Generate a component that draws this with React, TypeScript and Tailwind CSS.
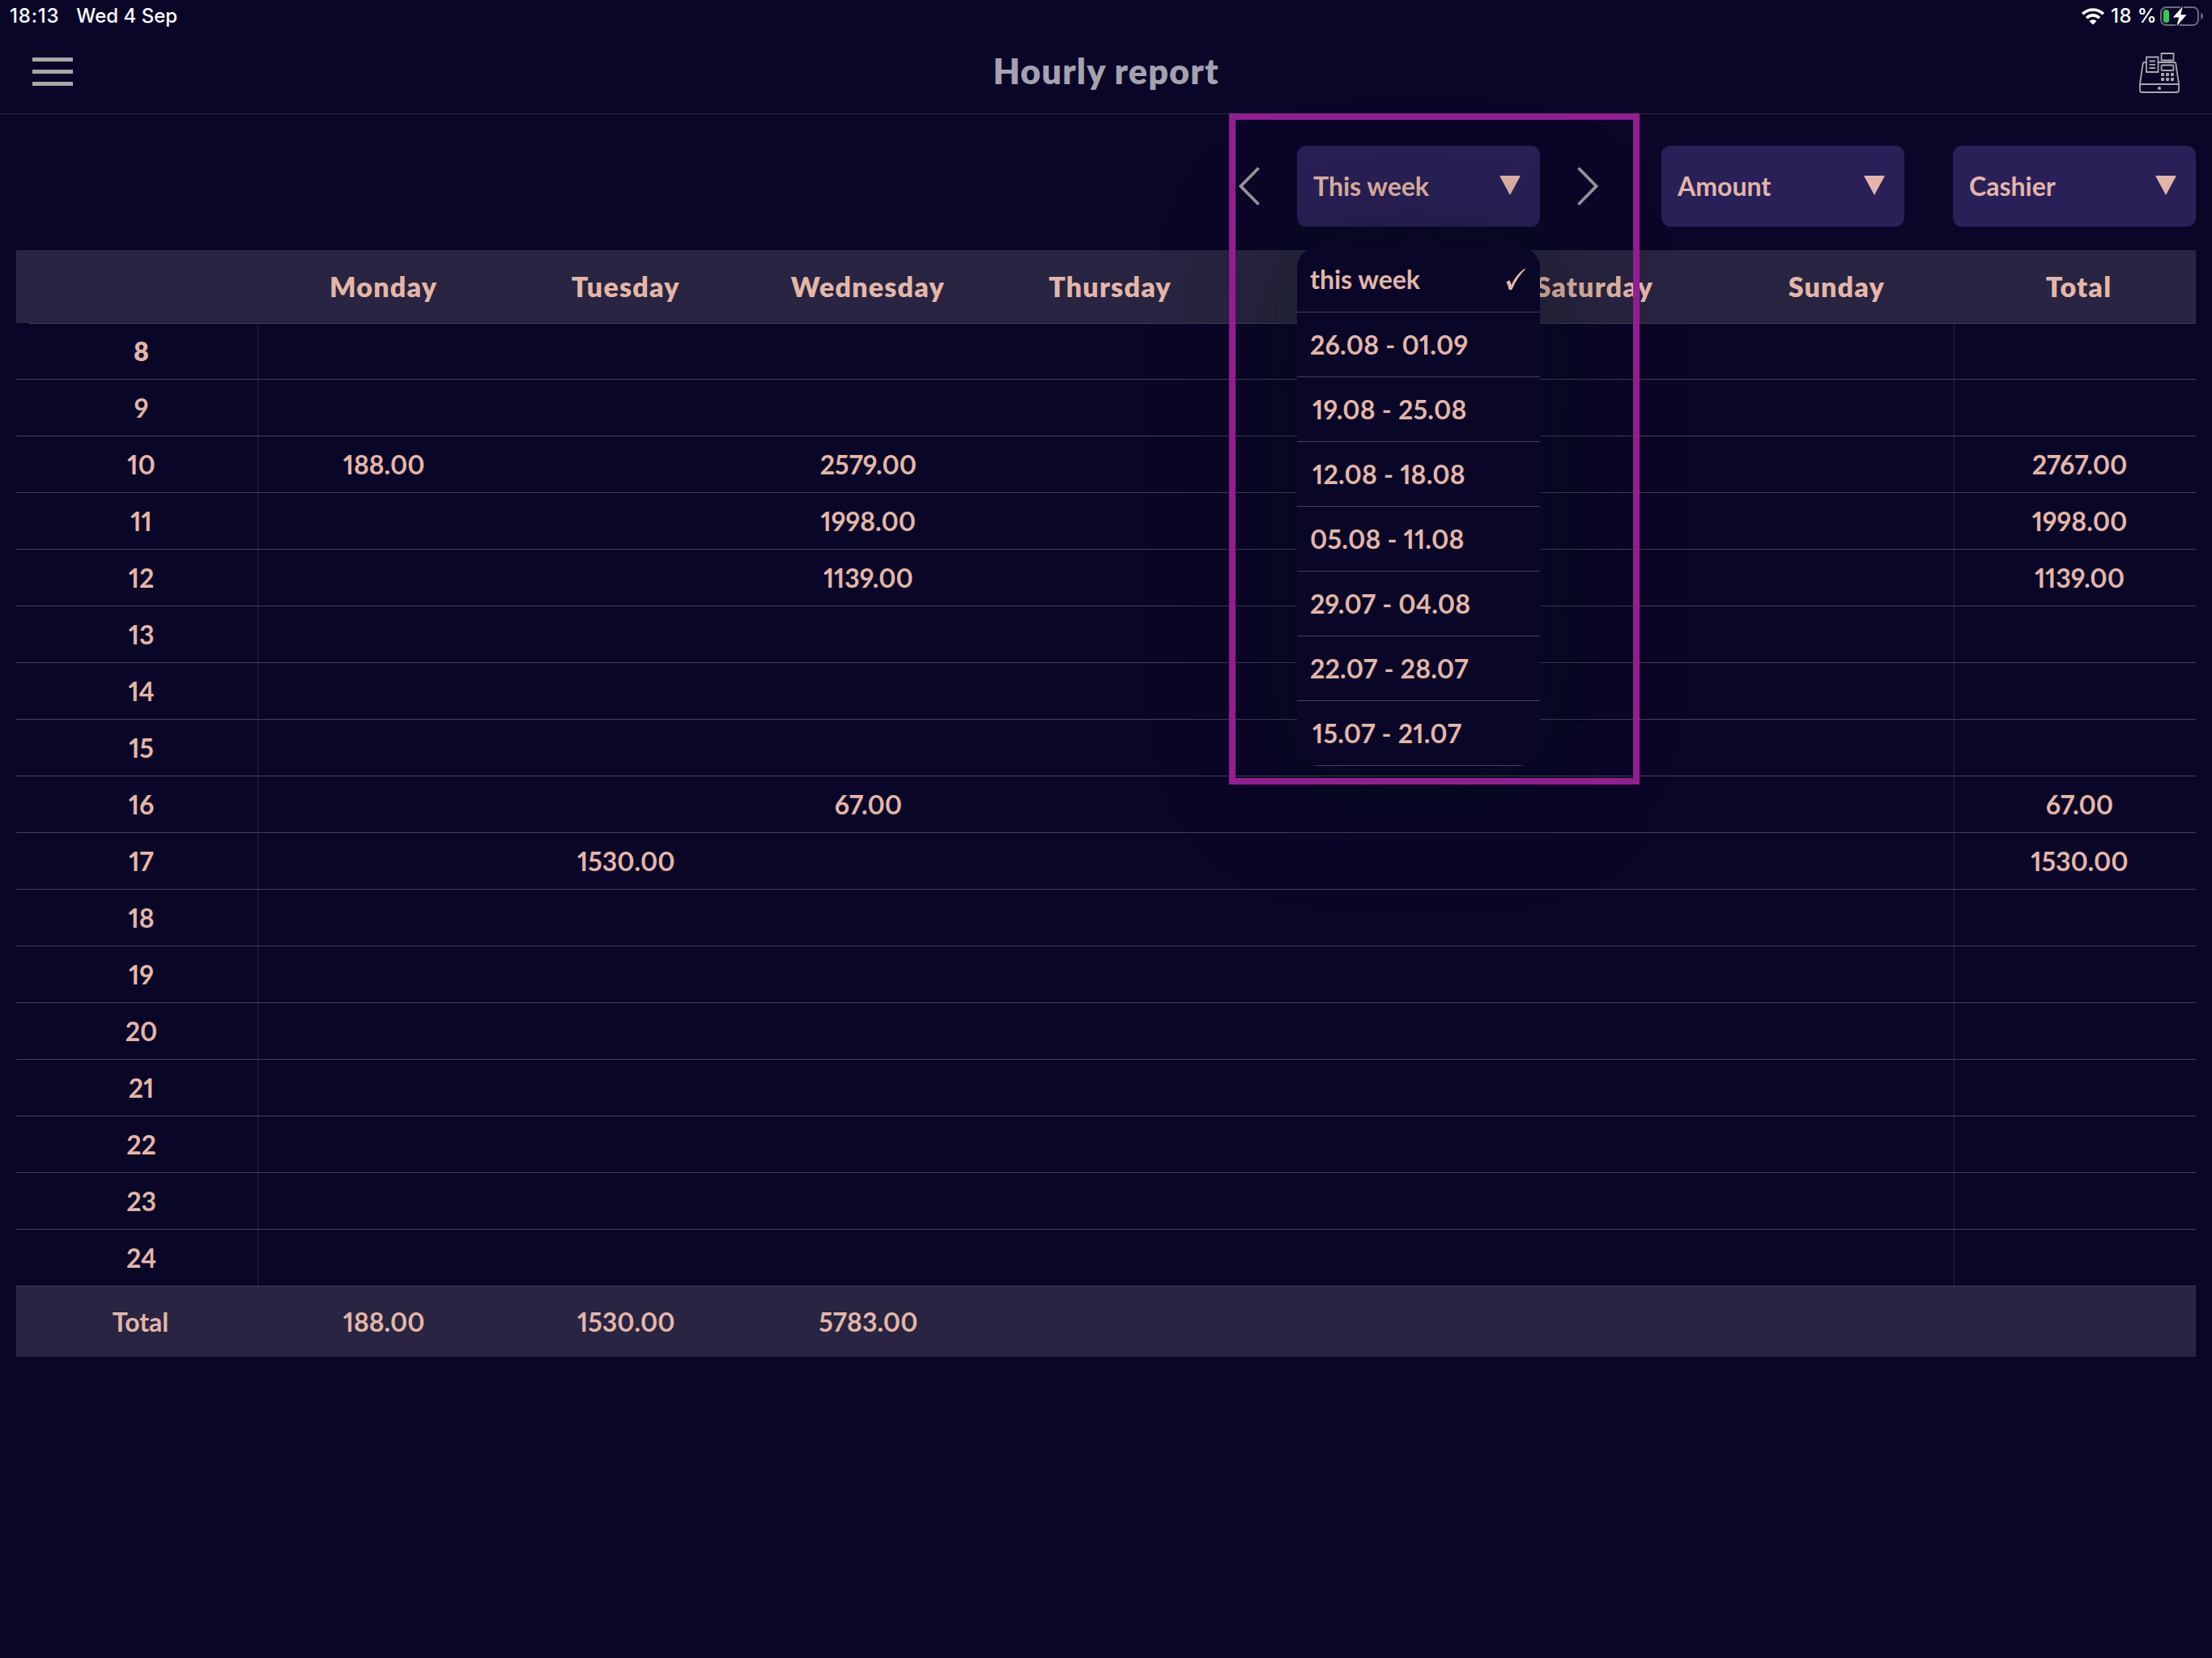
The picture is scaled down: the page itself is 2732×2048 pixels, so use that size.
import clsx from "clsx";

// the Friday heading sits under the open week menu
const columns = ["Monday", "Tuesday", "Wednesday", "Thursday", "", "Saturday", "Sunday", "Total"];

const hours = [8, 9, 10, 11, 12, 13, 14, 15, 16, 17, 18, 19, 20, 21, 22, 23, 24];

// values per hour, keyed by column (1 = Monday ... 8 = Total)
const values: Record<number, Record<number, string>> = {
  10: { 1: "188.00", 3: "2579.00", 8: "2767.00" },
  11: { 3: "1998.00", 8: "1998.00" },
  12: { 3: "1139.00", 8: "1139.00" },
  16: { 3: "67.00", 8: "67.00" },
  17: { 2: "1530.00", 8: "1530.00" },
};

const totals = ["Total", "188.00", "1530.00", "5783.00", "", "", "", "", ""];

const weeks = [
  "this week",
  "26.08 - 01.09",
  "19.08 - 25.08",
  "12.08 - 18.08",
  "05.08 - 11.08",
  "29.07 - 04.08",
  "22.07 - 28.07",
  "15.07 - 21.07",
];

function StatusBar() {
  return (
    <div className="h-10 pl-[12px] pr-[10px] flex items-center justify-between font-['Inter',sans-serif] text-[24px] font-medium leading-none text-white">
      <div className="flex gap-[21px]">
        <span className="tracking-[0.8px]">18:13</span>
        <span>Wed 4 Sep</span>
      </div>
      <div className="flex items-center">
        <svg className="w-[28px] h-[21px] mr-[8px]" viewBox="0 0 28 21" fill="none" stroke="#fff">
          <path d="M1.2 7.2a18.2 18.2 0 0 1 25.6 0" strokeWidth="3.6" />
          <path d="M6 12.2a11.4 11.4 0 0 1 16 0" strokeWidth="3.6" />
          <path d="M9.6 16a6.2 6.2 0 0 1 8.8 0L14 20.4z" fill="#fff" stroke="none" />
        </svg>
        <span className="mr-[4px] tracking-[0.4px]">18 %</span>
        <svg className="w-[54px] h-[26px]" viewBox="0 0 54 26" fill="none">
          <rect x="1" y="2" width="46" height="22" rx="6.5" stroke="#6d6a7e" strokeWidth="2" />
          <path d="M50.2 9v8c1.7-.6 2.8-2.200 2.800-4s-1.100-3.400-2.800-4z" fill="#6d6a7e" />
          <rect x="4" y="5" width="7" height="16" rx="3" fill="#34c759" />
          <path
            d="M28 .8L15.800 14.600h7.400L20.400 25.200 32.600 11.200h-7.400z"
            fill="#fff"
            stroke="#0a0628"
            strokeWidth="3"
            paintOrder="stroke"
          />
        </svg>
      </div>
    </div>
  );
}

function RegisterIcon() {
  return (
    <svg className="w-[50px] h-[50px]" viewBox="0 0 50 50" fill="none" stroke="#a9a7ab" strokeWidth="1.8">
      <path d="M9 12H6.500Q5 12 4.700 13.500L1 38.500v8q0 2.500 2.500 2.500h43q2.500 0 2.500-2.500v-8L45.300 13.500Q45 12 43.500 12H24M1 39h48" />
      <path d="M9 5.500h14.500v18.500H9zM12.500 10.500h7.500M12.500 14.800h7.500M12.500 19h7.500" />
      <path d="M27.500 1h15v8.500h-15zM32.500 9.500v2.500M37.500 9.500v2.500" />
      <rect x="27.500" y="15.500" width="15" height="6.500" rx="1" />
      <g fill="#a9a7ab" stroke="none">
        <rect x="27" y="25" width="4" height="4" rx="1" />
        <rect x="33" y="25" width="4" height="4" rx="1" />
        <rect x="39" y="25" width="4" height="4" rx="1" />
        <rect x="27" y="31" width="4" height="4" rx="1" />
        <rect x="33" y="31" width="4" height="4" rx="1" />
        <rect x="39" y="31" width="4" height="4" rx="1" />
        <circle cx="25" cy="44" r="2.100" />
      </g>
    </svg>
  );
}

function Header() {
  return (
    <header className="h-[101px] px-10 pb-[1px] border-b border-[#2f2b45] flex items-center justify-between">
      <button className="flex flex-col gap-[10px] pb-[2px]">
        <span className="w-[50px] h-[5px] bg-[#a9a7a6]" />
        <span className="w-[50px] h-[5px] bg-[#a9a7a6]" />
        <span className="w-[50px] h-[5px] bg-[#a9a7a6]" />
      </button>
      <h1 className="text-[43px] leading-none font-extrabold tracking-[1.2px] text-[#a4a1b0] pb-[5px]">Hourly report</h1>
      <button>
        <RegisterIcon />
      </button>
    </header>
  );
}

function Select({ label }: { label: string }) {
  return (
    <button className="w-[300px] h-[100px] rounded-[11px] bg-[#2a2058] pl-5 pr-6 flex items-center justify-between">
      <span>{label}</span>
      <svg className="w-[26px] h-[24px] mb-[2px]" viewBox="0 0 26 24" fill="#e3b6a8">
        <path d="M0 0h26L13 24z" />
      </svg>
    </button>
  );
}

function Chevron({ className }: { className?: string }) {
  return (
    <svg className={clsx("w-[26px] h-[48px]", className)} viewBox="0 0 26 48" fill="none" stroke="#97959c" strokeWidth="3.800">
      <path d="M24.500 1.500L2.500 24l22 22.500" />
    </svg>
  );
}

function WeekMenu() {
  return (
    <div className="absolute z-10 top-[125px] left-0 w-[300px] rounded-[26px] bg-[#0a0628] shadow-[0_0_150px_30px_rgba(0,20,8,0.3)]">
      <svg className="absolute -top-[24px] left-[120px] w-[60px] h-[25px]" viewBox="0 0 60 25" fill="#0a0628">
        <path d="M0 25C12 24 20 4 28 1q2-1 4 0C40 4 48 24 60 25z" />
      </svg>
      <ul className="rounded-[26px] overflow-hidden">
        {weeks.map((week, i) => (
          <li key={week} className="h-20 pl-4 pr-[17px] border-b border-[#443f5b] flex items-center justify-between first:h-[81px]">
            <span className={clsx(week.startsWith("1") && "pl-[3px]", i > 0 && "tracking-[0.2px]")}>{week}</span>
            {i === 0 && (
              <svg className="w-[25px] h-[28px]" viewBox="0 0 25 28" fill="#e3b6a8">
                <path d="M.5 17.500Q2.500 15 4.500 15.500Q6 17 6.500 21Q12 9 22 1.500L24.500 1Q14 11 7.500 26.500Q6 28 3.500 26.500Q2.500 21 .5 17.500z" />
              </svg>
            )}
          </li>
        ))}
      </ul>
    </div>
  );
}

function Filters() {
  return (
    <div className="h-[168px] pr-5 pt-[39px] flex justify-end items-start">
      <div className="h-[100px] flex items-center mr-[78px]">
        <Chevron className="mr-[46px]" />
        <div className="relative">
          <Select label="This week" />
          <WeekMenu />
        </div>
        <Chevron className="ml-[46px] rotate-180" />
      </div>
      <div className="flex gap-[60px]">
        <Select label="Amount" />
        <Select label="Cashier" />
      </div>
    </div>
  );
}

function ReportTable() {
  return (
    <div className="mx-5 text-center">
      <div className="grid grid-cols-9 h-[90px] pb-px items-center bg-[#282441] text-[34px] leading-none font-extrabold tracking-[1.2px]">
        <span />
        {columns.map((day, i) => (
          <span key={i} className="pl-[10px]">{day}</span>
        ))}
      </div>
      <div className="ml-4 h-px bg-[#423e58]" />
      {hours.map((hour, i) => (
        <div key={hour} className={clsx("grid grid-cols-9 border-b border-[#423e58]", i === 0 ? "h-[69px]" : "h-[70px]")}>
          <span className={clsx("pl-[11px] flex items-center justify-center border-r border-[#26223c]", i === 0 && "font-extrabold")}>{hour}</span>
          {columns.map((_, col) => (
            <span
              key={col}
              className={clsx("pl-[11px] flex items-center justify-center", col === 7 && "border-l border-[#26223c]")}
            >
              {values[hour]?.[col + 1]}
            </span>
          ))}
        </div>
      ))}
      <div className="grid grid-cols-9 h-[87px] items-center bg-[#282441]">
        {totals.map((total, i) => (
          <span key={i} className={i === 0 ? "pl-2" : "pl-[11px]"}>{total}</span>
        ))}
      </div>
    </div>
  );
}

export default function App() {
  return (
    <div className="relative w-[2732px] h-[2048px] overflow-hidden bg-[#0a0628] font-['Futura','Lato',sans-serif] text-[32px] leading-none font-bold proportional-nums text-[#e3b6a8]">
      <StatusBar />
      <Header />
      <Filters />
      <ReportTable />
      {/* highlight around the week picker */}
      <div className="absolute z-20 left-[1518px] top-[140px] w-[507px] h-[829px] border-8 border-[#921f90]" />
    </div>
  );
}
